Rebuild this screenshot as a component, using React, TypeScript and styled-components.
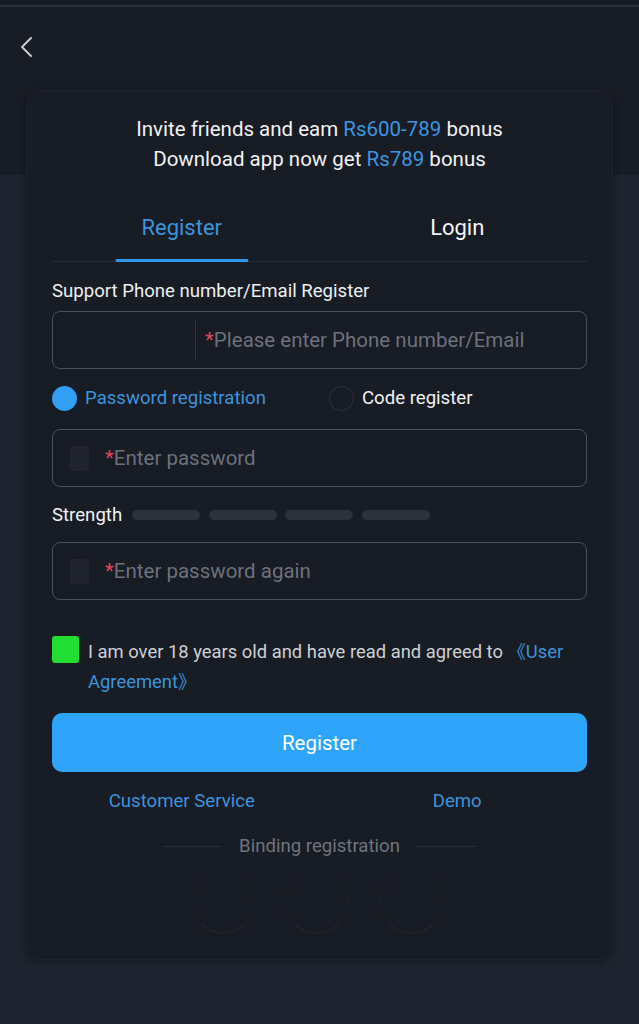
import styled, { createGlobalStyle } from "styled-components";

const GlobalStyle = createGlobalStyle`
  html, body {
    margin: 0;
    padding: 0;
  }
  body {
    font-family: Roboto, "Liberation Sans", "Noto Sans CJK SC", sans-serif;
    background: #1f2430;
  }
`;

const Page = styled.div`
  min-height: 1024px;
  background: linear-gradient(#181c24 0, #181c24 170px, #1f2430 170px);
  border-top: 5px solid #181c24;
  box-sizing: border-box;
  &::before {
    content: "";
    display: block;
    height: 2px;
    background: #2b303a;
  }
`;

const TopBar = styled.div`
  height: 80px;
  display: flex;
  align-items: center;
  padding-left: 18px;
  color: #c7cad1;
`;

const Card = styled.div`
  margin: 3px 26px 0;
  padding: 23px 25px 25px;
  background: #181c24;
  border-radius: 14px;
  border: 1px solid #1e2330;
  box-shadow: 0 2px 6px rgba(0, 0, 0, 0.35);
  display: flex;
  flex-direction: column;
`;

const Promo = styled.div`
  text-align: center;
  color: #f1f2f4;
  font-size: 20.5px;
  line-height: 30px;
`;

const Hl = styled.span`
  color: #3b97e2;
`;

const Tabs = styled.div`
  display: grid;
  grid-template-columns: 1fr 1fr;
  margin: 18px -8px 0;
  position: relative;
  &::after {
    content: "";
    position: absolute;
    left: 8px;
    right: 8px;
    bottom: 0;
    height: 1px;
    background: #262b35;
  }
`;

const Tab = styled.div<{ $active?: boolean }>`
  height: 70px;
  display: flex;
  align-items: center;
  justify-content: center;
  position: relative;
  font-size: 22px;
  color: ${({ $active }) => ($active ? "#3b94dd" : "#f4f5f7")};
  &::after {
    content: "";
    display: ${({ $active }) => ($active ? "block" : "none")};
    position: absolute;
    bottom: 0;
    left: 50%;
    transform: translateX(-50%);
    width: 133px;
    height: 3px;
    border-radius: 2px;
    background: #2f98ee;
    z-index: 1;
  }
`;

const Label = styled.div`
  margin-top: 17px;
  font-size: 18.6px;
  line-height: 24px;
  color: #eef0f2;
`;

const Field = styled.div<{ $mt: number }>`
  margin-top: ${({ $mt }) => $mt}px;
  height: 58px;
  box-sizing: border-box;
  border: 1.5px solid #4b515d;
  border-radius: 8px;
  display: flex;
  align-items: center;
`;

const Prefix = styled.div`
  width: 142px;
  align-self: stretch;
  margin: 9px 0;
  border-right: 1px solid #2f3440;
`;

const Placeholder = styled.div<{ $pl: number }>`
  padding-left: ${({ $pl }) => $pl}px;
  font-size: 20.5px;
  color: #6c717c;
  white-space: nowrap;
`;

const Star = styled.span`
  color: #e0455e;
`;

const LockBox = styled.div`
  width: 19px;
  height: 25px;
  margin-left: 17px;
  border-radius: 3px;
  background: #21252e;
`;

const RadioRow = styled.div`
  margin-top: 16px;
  display: flex;
  align-items: center;
  height: 26px;
`;

const RadioItem = styled.div<{ $width?: number; $active?: boolean }>`
  display: flex;
  align-items: center;
  gap: 8px;
  width: ${({ $width }) => ($width ? `${$width}px` : "auto")};
  font-size: 18.6px;
  color: ${({ $active }) => ($active ? "#3b94dd" : "#f1f2f4")};
`;

const Dot = styled.div<{ $active?: boolean }>`
  width: 25px;
  height: 25px;
  border-radius: 50%;
  box-sizing: border-box;
  background: ${({ $active }) => ($active ? "#2f9ff5" : "transparent")};
  border: ${({ $active }) => ($active ? "none" : "1.5px solid #2f3440")};
`;

const StrengthRow = styled.div`
  margin-top: 17px;
  display: flex;
  align-items: center;
  gap: 10px;
  font-size: 18.6px;
  color: #f1f2f4;
  height: 22px;
`;

const Bars = styled.div`
  display: flex;
  gap: 8.5px;
`;

const Bar = styled.div`
  width: 68px;
  height: 10px;
  border-radius: 5px;
  background: #2c313c;
`;

const AgreeRow = styled.div`
  margin-top: 36px;
  display: flex;
  align-items: flex-start;
  gap: 9px;
`;

const Check = styled.div`
  flex: none;
  width: 27px;
  height: 27px;
  border-radius: 3px;
  background: #23de32;
`;

const AgreeText = styled.div`
  font-size: 18.4px;
  line-height: 30px;
  color: #cdd0d5;
  margin-top: 1px;
`;

const Link = styled.span`
  color: #3b94dd;
`;

const Button = styled.button`
  margin-top: 16px;
  height: 59px;
  border: none;
  border-radius: 10px;
  background: #2ea5fa;
  color: #ffffff;
  font-family: inherit;
  font-size: 20.5px;
`;

const LinksRow = styled.div`
  display: grid;
  grid-template-columns: 1fr 1fr;
  margin: 18px -8px 0;
  font-size: 18.6px;
  line-height: 22px;
  color: #3b94dd;
  text-align: center;
`;

const Divider = styled.div`
  margin-top: 23px;
  display: flex;
  align-items: center;
  justify-content: center;
  gap: 17px;
  font-size: 18.6px;
  line-height: 22px;
  color: #6f747e;
  &::before,
  &::after {
    content: "";
    width: 60px;
    height: 1px;
    background: #272c35;
  }
`;

const Socials = styled.div`
  margin-top: 13px;
  display: flex;
  justify-content: center;
  gap: 30px;
  padding-right: 6px;
`;

const Social = styled.div`
  width: 64px;
  height: 64px;
  border-radius: 50%;
  box-sizing: border-box;
  border: 2px solid transparent;
  border-bottom-color: #1f232b;
  border-left-color: #1b1f27;
  border-right-color: #1b1f27;
`;

const App = () => {
  return (
    <>
      <GlobalStyle />
      <Page>
        <TopBar>
          <svg width="18" height="24" viewBox="0 0 18 24" fill="none">
            <path d="M13 3 L4 12 L13 21" stroke="#c7cad1" strokeWidth="2" strokeLinecap="round" strokeLinejoin="round" />
          </svg>
        </TopBar>
        <Card>
          <Promo>
            Invite friends and eam <Hl>Rs600-789</Hl> bonus
            <br />
            Download app now get <Hl>Rs789</Hl> bonus
          </Promo>
          <Tabs>
            <Tab $active>Register</Tab>
            <Tab>Login</Tab>
          </Tabs>
          <Label>Support Phone number/Email Register</Label>
          <Field $mt={8}>
            <Prefix />
            <Placeholder $pl={9}>
              <Star>*</Star>Please enter Phone number/Email
            </Placeholder>
          </Field>
          <RadioRow>
            <RadioItem $width={277} $active>
              <Dot $active />
              Password registration
            </RadioItem>
            <RadioItem>
              <Dot />
              Code register
            </RadioItem>
          </RadioRow>
          <Field $mt={18}>
            <LockBox />
            <Placeholder $pl={16}>
              <Star>*</Star>Enter password
            </Placeholder>
          </Field>
          <StrengthRow>
            Strength
            <Bars>
              <Bar />
              <Bar />
              <Bar />
              <Bar />
            </Bars>
          </StrengthRow>
          <Field $mt={16}>
            <LockBox />
            <Placeholder $pl={16}>
              <Star>*</Star>Enter password again
            </Placeholder>
          </Field>
          <AgreeRow>
            <Check />
            <AgreeText>
              I am over 18 years old and have read and agreed to <Link>《User Agreement》</Link>
            </AgreeText>
          </AgreeRow>
          <Button>Register</Button>
          <LinksRow>
            <span>Customer Service</span>
            <span>Demo</span>
          </LinksRow>
          <Divider>Binding registration</Divider>
          <Socials>
            <Social />
            <Social />
            <Social />
          </Socials>
        </Card>
      </Page>
    </>
  );
};

export default App;
